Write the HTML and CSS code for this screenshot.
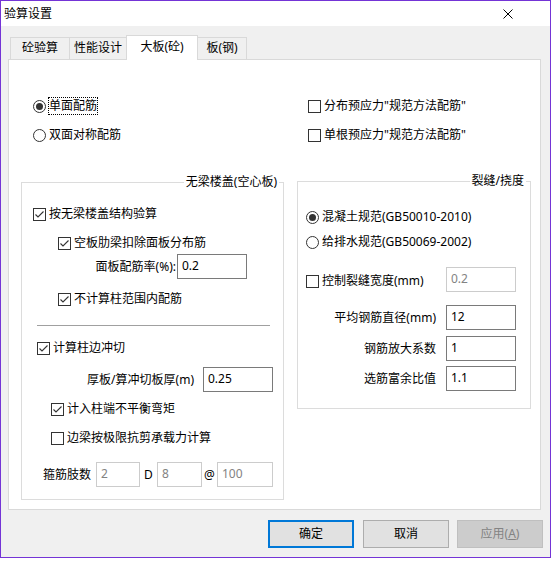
FILE: index.html
```html
<!DOCTYPE html>
<html lang="zh-CN">
<head>
<meta charset="utf-8">
<title>验算设置</title>
<link rel="stylesheet" href="styles.css">
</head>
<body>
<div class="window">
  <div class="titlebar">
    <span class="title">验算设置</span>
    <svg class="close" width="10" height="10" viewBox="0 0 10 10"><path d="M0.5 0.5 L9.5 9.5 M9.5 0.5 L0.5 9.5" stroke="#000" stroke-width="1" fill="none"/></svg>
  </div>
  <div class="client">
    <div class="tabs">
      <div class="tab t1">砼验算</div>
      <div class="tab t2">性能设计</div>
      <div class="tab active t3">大板(砼)</div>
      <div class="tab t4">板(钢)</div>
    </div>
    <div class="panel">
      <div class="top-options">
        <div class="col-left">
          <div class="opt"><span class="radio on"></span><span class="focus">单面配筋</span></div>
          <div class="opt gap9"><span class="radio"></span><span class="lbl">双面对称配筋</span></div>
        </div>
        <div class="col-right">
          <div class="opt"><span class="check"></span><span class="lbl">分布预应力"规范方法配筋"</span></div>
          <div class="opt gap9"><span class="check"></span><span class="lbl">单根预应力"规范方法配筋"</span></div>
        </div>
      </div>
      <div class="groups">
        <div class="group g-left">
          <span class="gtitle">无梁楼盖(空心板)</span>
          <div class="opt l-cb1"><span class="check on"></span><span class="lbl">按无梁楼盖结构验算</span></div>
          <div class="opt l-cb2"><span class="check on"></span><span class="lbl">空板肋梁扣除面板分布筋</span></div>
          <div class="frow l-rate"><span class="flabel w154">面板配筋率(%):</span><input class="field" type="text" value="0.2" readonly></div>
          <div class="opt l-cb3"><span class="check on"></span><span class="lbl">不计算柱范围内配筋</span></div>
          <div class="sep"></div>
          <div class="opt l-cb4"><span class="check on"></span><span class="lbl">计算柱边冲切</span></div>
          <div class="frow l-thick"><span class="flabel w172">厚板/算冲切板厚(m)</span><input class="field" type="text" value="0.25" readonly></div>
          <div class="opt l-cb5"><span class="check on"></span><span class="lbl">计入柱端不平衡弯矩</span></div>
          <div class="opt l-cb6"><span class="check"></span><span class="lbl">边梁按极限抗剪承载力计算</span></div>
          <div class="frow l-stirrup">
            <span class="slabel">箍筋肢数</span>
            <input class="field dis w44" type="text" value="2" disabled>
            <span class="mid w17">D</span>
            <input class="field dis w45" type="text" value="8" disabled>
            <span class="mid w15">@</span>
            <input class="field dis w56" type="text" value="100" disabled>
          </div>
        </div>
        <div class="group g-right">
          <span class="gtitle">裂缝/挠度</span>
          <div class="opt r-rad1"><span class="radio on"></span><span class="lbl">混凝土规范(GB50010-2010)</span></div>
          <div class="opt r-rad2"><span class="radio"></span><span class="lbl">给排水规范(GB50069-2002)</span></div>
          <div class="rrow r-crack"><span class="opt grow"><span class="check"></span><span class="lbl">控制裂缝宽度(mm)</span></span><input class="field dis" type="text" value="0.2" disabled></div>
          <div class="rrow r-dia"><span class="rlabel">平均钢筋直径(mm)</span><input class="field" type="text" value="12" readonly></div>
          <div class="rrow r-amp"><span class="rlabel">钢筋放大系数</span><input class="field" type="text" value="1" readonly></div>
          <div class="rrow r-ratio"><span class="rlabel">选筋富余比值</span><input class="field" type="text" value="1.1" readonly></div>
        </div>
      </div>
    </div>
    <div class="buttons">
      <button class="btn default">确定</button>
      <button class="btn cancel">取消</button>
      <button class="btn disabled" disabled>应用(<u>A</u>)</button>
    </div>
  </div>
</div>
</body>
</html>
```

FILE: styles.css
```css
* { box-sizing: border-box; }
html, body { margin: 0; padding: 0; background: #ffffff; }
body {
  font-family: "Noto Sans", "Noto Sans CJK SC", sans-serif;
  font-size: 12px;
  line-height: 16px;
  color: #000;
}
.window {
  width: 551px;
  height: 558px;
  border: 1px solid #7434d6;
  display: flex;
  flex-direction: column;
}
.titlebar {
  height: 25px;
  background: #fff;
  display: flex;
  align-items: center;
  justify-content: space-between;
  padding-left: 3px;
  padding-right: 37px;
}
.close { display: block; }
.client {
  flex: 1;
  background: #f0f0f0;
  padding-top: 9px;
}
.tabs {
  display: flex;
  align-items: flex-start;
  height: 24px;
  margin-left: 9px;
}
.tab {
  height: 22px;
  margin-top: 2px;
  border-top: 1px solid #d9d9d9;
  border-left: 1px solid #d9d9d9;
  background: #f0f0f0;
  display: flex;
  align-items: center;
  justify-content: center;
  padding-bottom: 1px;
}
.t1 { width: 59px; }
.t2 { width: 57px; }
.t3 { width: 72px; }
.t4 { width: 49px; border-left: none; border-right: 1px solid #d9d9d9; }
.tab.active {
  height: 25px;
  margin-top: 0;
  background: #fff;
  border-right: 1px solid #d9d9d9;
  position: relative;
  z-index: 1;
  padding-bottom: 3px;
}
.panel {
  margin-left: 7px;
  width: 533px;
  height: 451px;
  background: #fff;
  border: 1px solid #d9d9d9;
  padding-top: 36px;
}
.top-options { display: flex; }
.col-left { width: 299px; padding-left: 24px; }
.col-right { flex: 1; }
.opt {
  display: flex;
  align-items: center;
  height: 20px;
}
.gap9 { margin-top: 9px; }
.radio, .check {
  width: 13px;
  height: 13px;
  flex: none;
  background: #fff;
  border: 1px solid #333;
  position: relative;
}
.radio { border-radius: 50%; }
.radio.on::after {
  content: "";
  position: absolute;
  left: 2px; top: 2px;
  width: 7px; height: 7px;
  border-radius: 50%;
  background: #333;
}
.check.on {
  background: #fff url("data:image/svg+xml;utf8,<svg xmlns='http://www.w3.org/2000/svg' width='11' height='11' viewBox='0 0 11 11'><polyline points='1.5,5.5 4,8 9.5,2.5' fill='none' stroke='%23333' stroke-width='1.1'/></svg>") no-repeat center;
}
.lbl { margin-left: 3px; white-space: nowrap; }
.focus {
  margin-left: 2px;
  border: 1px dotted #000;
  line-height: 16px;
  white-space: nowrap;
}
.groups {
  display: flex;
  align-items: flex-start;
  margin-top: 37px;
  margin-left: 12px;
}
.group {
  position: relative;
  border: 1px solid #dcdcdc;
  display: flex;
  flex-direction: column;
}
.g-left { width: 263px; height: 318px; }
.g-right { width: 234px; height: 228px; margin-left: 13px; margin-top: -1px; }
.gtitle {
  position: absolute;
  top: -9px;
  right: 4px;
  padding: 0 2px;
  background: #fff;
  white-space: nowrap;
}
.l-cb1 { margin-top: 21px; padding-left: 11px; }
.l-cb2 { margin-top: 9px; padding-left: 36px; }
.frow { display: flex; align-items: center; height: 25px; }
.l-rate { margin-top: 1px; }
.flabel { text-align: right; white-space: nowrap; }
.w154 { width: 154px; margin-right: 1px; }
.w172 { width: 172px; margin-right: 9px; }
.l-cb3 { margin-top: 10px; padding-left: 36px; }
.sep {
  margin-top: 16px;
  margin-left: 15px;
  width: 233px;
  height: 1px;
  background: #a0a0a0;
  flex: none;
}
.l-cb4 { margin-top: 12px; padding-left: 15px; }
.l-thick { margin-top: 9px; }
.l-cb5 { margin-top: 7px; padding-left: 29px; }
.l-cb6 { margin-top: 9px; padding-left: 29px; }
.l-stirrup { margin-top: 14px; padding-left: 21px; }
.slabel { width: 48px; margin-right: 5px; white-space: nowrap; }
.mid { text-align: center; }
.w17 { width: 17px; }
.w15 { width: 15px; }
.field {
  width: 70px;
  height: 25px;
  border: 1px solid #7a7a7a;
  background: #fff;
  font: inherit;
  color: #000;
  padding: 0 0 2px 4px;
  margin: 0;
  outline: none;
  flex: none;
}
.field.dis { border-color: #cccccc; color: #838383; background: #fff; }
.w44 { width: 44px; }
.w45 { width: 45px; }
.w56 { width: 56px; }
.r-rad1 { margin-top: 25px; padding-left: 8px; }
.r-rad2 { margin-top: 5px; padding-left: 8px; }
.rrow {
  display: flex;
  align-items: center;
  height: 25px;
  padding-right: 14px;
}
.grow { flex: 1; }
.r-crack { margin-top: 15px; padding-left: 8px; }
.r-crack .opt { height: 25px; padding-top: 3px; }
.rlabel { flex: 1; text-align: right; margin-right: 10px; white-space: nowrap; }
.r-dia { margin-top: 13px; }
.r-amp { margin-top: 6px; }
.r-ratio { margin-top: 5px; }
.buttons {
  display: flex;
  justify-content: flex-end;
  margin-top: 10px;
  padding-right: 7px;
}
.btn {
  width: 86px;
  height: 28px;
  font: inherit;
  color: #000;
  background: #e1e1e1;
  border: 1px solid #adadad;
  padding: 0;
  margin: 0;
}
.btn.default { border: 2px solid #0078d7; }
.btn.cancel { margin-left: 9px; }
.btn.disabled {
  margin-left: 8px;
  background: #cccccc;
  border-color: #bfbfbf;
  color: #838383;
}
.btn u { text-decoration: underline; }
```
